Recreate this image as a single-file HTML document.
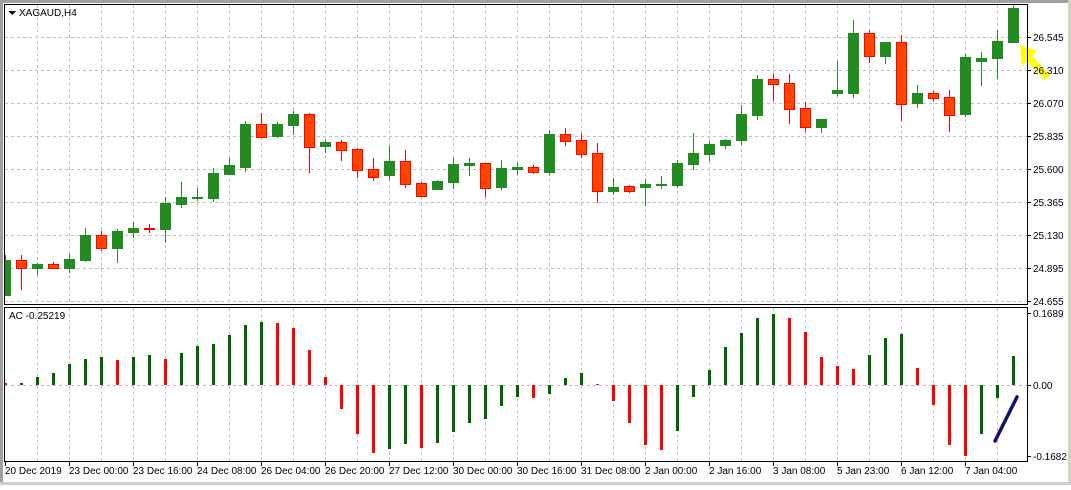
<!DOCTYPE html>
<html><head><meta charset="utf-8"><style>
html,body{margin:0;padding:0;background:#fff;}
body{width:1071px;height:485px;overflow:hidden;}
svg text{font-family:"Liberation Sans",Arial,sans-serif;font-size:10px;fill:#000;}
</style></head><body>
<svg id="s" width="1071" height="485" viewBox="0 0 1071 485" xmlns="http://www.w3.org/2000/svg" shape-rendering="crispEdges">
<rect x="0" y="0" width="1071" height="485" fill="#fff"/>
<rect x="0" y="0" width="1071" height="3" fill="#a0a0a0"/>
<rect x="0" y="0" width="3" height="485" fill="#a0a0a0"/>
<rect x="0" y="482" width="1071" height="3" fill="#d4d0c8"/>
<rect x="1068" y="0" width="3" height="485" fill="#d4d0c8"/>
<g id="grid" stroke="#c0c0c0" stroke-width="1" stroke-dasharray="3,3"></g>
<g id="candles"></g>
<g id="bars"></g>
<line x1="995" y1="441" x2="1017" y2="397" stroke="#10106e" stroke-width="3.5" stroke-linecap="round" shape-rendering="auto"/>
<polygon points="1020,45 1037,51 1032,56 1050,75 1045,80 1027,61 1022,66" fill="#ffff00" shape-rendering="auto"/>
<rect x="4.5" y="4.5" width="1023" height="300" fill="none" stroke="#000"/>
<rect x="4.5" y="307.5" width="1023" height="154" fill="none" stroke="#000"/>
<g id="ticks" stroke="#000"></g>
<polygon points="8,11 16,11 12,15" fill="#000"/>
<text x="19" y="16">XAGAUD,H4</text>
<text x="9" y="319">AC -0.25219</text>
<g>
<text x="1033" y="41">26.545</text>
<text x="1033" y="74">26.310</text>
<text x="1033" y="107">26.070</text>
<text x="1033" y="140">25.835</text>
<text x="1033" y="173">25.600</text>
<text x="1033" y="206">25.365</text>
<text x="1033" y="239">25.130</text>
<text x="1033" y="272">24.895</text>
<text x="1033" y="305">24.655</text>
<text x="1033" y="317">0.1689</text>
<text x="1033" y="389">0.00</text>
<text x="1033" y="460">-0.1682</text>
</g>
<g>
<text x="5" y="474">20 Dec 2019</text>
<text x="69" y="474">23 Dec 00:00</text>
<text x="133" y="474">23 Dec 16:00</text>
<text x="197" y="474">24 Dec 08:00</text>
<text x="261" y="474">26 Dec 04:00</text>
<text x="325" y="474">26 Dec 20:00</text>
<text x="389" y="474">27 Dec 12:00</text>
<text x="453" y="474">30 Dec 00:00</text>
<text x="517" y="474">30 Dec 16:00</text>
<text x="581" y="474">31 Dec 08:00</text>
<text x="645" y="474">2 Jan 00:00</text>
<text x="709" y="474">2 Jan 16:00</text>
<text x="773" y="474">3 Jan 08:00</text>
<text x="837" y="474">5 Jan 23:00</text>
<text x="901" y="474">6 Jan 12:00</text>
<text x="965" y="474">7 Jan 04:00</text>
</g>
</svg>
<script>
var NS="http://www.w3.org/2000/svg";
function el(p,t,a){var e=document.createElementNS(NS,t);for(var k in a)e.setAttribute(k,a[k]);p.appendChild(e);return e;}
var g=document.getElementById("grid");
for(var x=37;x<1027;x+=32){el(g,"line",{x1:x+.5,y1:5,x2:x+.5,y2:304});el(g,"line",{x1:x+.5,y1:308,x2:x+.5,y2:461});}
[37,70,103,136,169,202,235,268,301].forEach(function(y){el(g,"line",{x1:5,y1:y+.5,x2:1027,y2:y+.5});});
el(g,"line",{x1:5,y1:385.5,x2:1027,y2:385.5});
var t=document.getElementById("ticks");
[37,70,103,136,169,202,235,268,301,313,385,456].forEach(function(y){el(t,"line",{x1:1028,y1:y+.5,x2:1031,y2:y+.5});});
for(var x=5;x<1027;x+=64){el(t,"line",{x1:x+.5,y1:462,x2:x+.5,y2:466});}
var C=[[260,295,255,295,'g'],[260,268,255,289,'r'],[264,268,263,274,'g'],[264,268,262,268,'r'],[259,268,254,272,'g'],
[235,260,228,261,'g'],[235,248,231,250,'r'],[231,248,229,262,'g'],[228,232,222,237,'g'],[228,229,224,232,'r'],
[203,229,197,242,'g'],[197,204,182,207,'g'],[197,198,188,200,'g'],[173,198,168,201,'g'],[165,174,158,174,'g'],
[124,167,121,171,'g'],[124,137,113,137,'r'],[124,136,122,137,'g'],[114,125,111,134,'g'],[114,147,113,172,'r'],
[142,146,140,152,'g'],[142,150,140,160,'r'],[149,170,148,177,'r'],[169,177,158,180,'r'],[161,175,146,179,'g'],
[161,184,150,187,'r'],[183,196,182,196,'r'],[181,189,180,189,'g'],[164,182,158,188,'g'],[163,165,158,175,'g'],
[163,188,163,196,'r'],[168,187,160,189,'g'],[167,169,163,174,'g'],[167,172,165,173,'r'],[134,172,130,174,'g'],
[134,141,128,145,'r'],[140,154,133,157,'r'],[153,191,143,202,'r'],[187,191,178,194,'g'],[186,191,185,192,'r'],
[184,187,179,205,'g'],[184,185,176,188,'g'],[163,185,160,187,'g'],[153,164,133,169,'g'],[144,154,141,160,'g'],
[140,145,139,148,'g'],[114,140,105,144,'g'],[79,115,75,119,'g'],[79,84,74,100,'r'],[83,109,74,123,'r'],
[108,127,102,131,'r'],[119,127,119,132,'g'],[90,93,61,95,'g'],[33,93,20,97,'g'],[33,56,30,62,'r'],
[42,56,42,63,'g'],[42,104,35,120,'r'],[93,103,85,107,'g'],[93,98,91,100,'r'],[97,115,90,131,'r'],
[57,114,54,116,'g'],[58,61,52,85,'g'],[41,58,30,78,'g'],[8,42,5,42,'g']];
var cg=document.getElementById("candles");
C.forEach(function(c,i){
 var L=16*i, col=c[4]=='g'?'#228B22':'#FF0000';
 var lx=Math.max(L,5);
 el(cg,"rect",{x:L+5,y:Math.max(c[2],5),width:1,height:c[3]-Math.max(c[2],5)+1,fill:col});
 var h=Math.max(c[1]-c[0],1);
 if(c[4]=='g'){el(cg,"rect",{x:lx,y:c[0],width:L+11-lx,height:h+1,fill:'#228B22'});}
 else{el(cg,"rect",{x:lx,y:c[0],width:L+11-lx,height:h+1,fill:'#FF0000'});
  if(h>2)el(cg,"rect",{x:lx+1,y:c[0]+1,width:L+9-lx,height:h-1,fill:'#FF4500'});}
});
var B=[[383,'r'],[383,'g'],[377,'g'],[373,'g'],[364,'g'],[359,'g'],[357,'g'],[360,'r'],[357,'g'],[355,'g'],
[359,'r'],[353,'g'],[346,'g'],[344,'g'],[335,'g'],[325,'g'],[322,'g'],[323,'r'],[328,'r'],[350,'r'],
[377,'r'],[409,'r'],[434,'r'],[453,'r'],[449,'g'],[444,'g'],[448,'r'],[443,'g'],[432,'g'],[423,'g'],
[419,'g'],[406,'g'],[397,'g'],[398,'r'],[394,'g'],[378,'g'],[373,'g'],[384,'r'],[401,'r'],[423,'r'],
[445,'r'],[450,'r'],[431,'g'],[397,'g'],[370,'g'],[347,'g'],[333,'g'],[318,'g'],[314,'g'],[318,'r'],
[332,'r'],[357,'r'],[366,'r'],[369,'r'],[355,'g'],[338,'g'],[334,'g'],[368,'r'],[405,'r'],[445,'r'],
[456,'r'],[434,'g'],[398,'g'],[356,'g']];
var bg=document.getElementById("bars");
B.forEach(function(b,i){
 var x=Math.max(4+16*i,5), y0=385, y=b[0], top=Math.min(y,y0), hh=Math.max(Math.abs(y-y0),1);
 el(bg,"rect",{x:x,y:top,width:(4+16*i+3)-x,height:hh,fill:b[1]=='g'?'#006400':'#FF0000'});
});
</script>
</body></html>
